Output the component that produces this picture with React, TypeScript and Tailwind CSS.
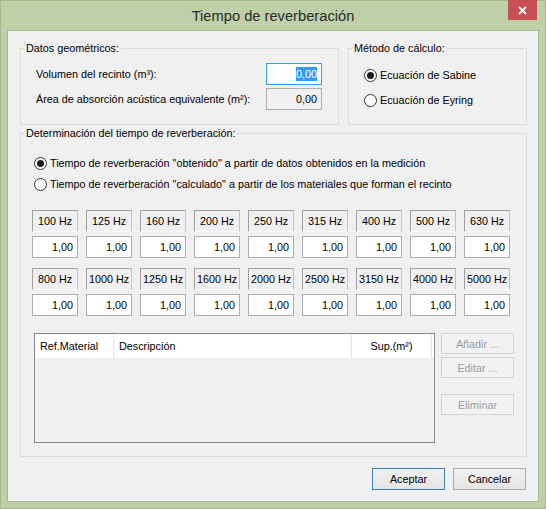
import React from "react";

const row1 = ["100", "125", "160", "200", "250", "315", "400", "500", "630"];
const row2 = ["800", "1000", "1250", "1600", "2000", "2500", "3150", "4000", "5000"];

function Radio({ checked }: { checked?: boolean }) {
  return (
    <span className="w-[13px] h-[13px] rounded-full border border-[#333333] bg-white flex items-center justify-center shrink-0">
      {checked && <span className="w-[7px] h-[7px] rounded-full bg-[#1c1c1c]" />}
    </span>
  );
}

function FreqLabel({ f }: { f: string }) {
  return (
    <div className="h-[22px] flex items-center justify-center border border-t-[#a0a0a0] border-l-[#a0a0a0] border-r-[#c4c4c4] border-b-[#f8f8f8] whitespace-nowrap">
      {f} Hz
    </div>
  );
}

function FreqValue() {
  return (
    <div className="h-[22px] flex items-center justify-end pr-[4px] bg-white border border-[#abadb3]">
      1,00
    </div>
  );
}

function DisabledBtn({ label }: { label: string }) {
  return (
    <div className="w-[73px] h-[21px] flex items-center justify-center border border-[#d4d4d4] bg-[#f2f2f2] text-[#9c9c9c]">
      {label}
    </div>
  );
}

export default function App() {
  return (
    <div className="w-[546px] h-[509px] bg-[#bfd0a8] border border-[#a3b78b] flex flex-col font-['Liberation_Sans',Arial,sans-serif] text-[10.8px] leading-[16px] text-black">
      {/* Title bar */}
      <div className="h-[29px] relative flex items-center justify-center">
        <span className="text-[14.7px] text-[#2b2b2b] pt-[1px]">Tiempo de reverberación</span>
        <div className="absolute right-[8px] top-[-1px] w-[29px] h-[20px] bg-[#c75050] flex items-center justify-center">
          <svg width="9" height="9" viewBox="0 0 9 9">
            <path d="M1 1 L8 8 M8 1 L1 8" stroke="white" strokeWidth="1.8" />
          </svg>
        </div>
      </div>

      {/* Client area */}
      <div className="mx-[6px] mb-[6px] flex-1 border border-[#a8bb90] bg-[#f0f0f0] flex flex-col">
        <div className="flex pl-[12px] pr-[11px] pt-[9px] gap-[9px]">
          <fieldset className="w-[319px] h-[85px] border border-[#dcdcdc]">
            <legend className="ml-[3px] px-[2px]">Datos geométricos:</legend>
            <div className="flex flex-col gap-[3px] pl-[15px] pr-[16px] pt-[7px]">
              <div className="flex items-center justify-between h-[22px]">
                <span className="whitespace-nowrap">Volumen del recinto (m³):</span>
                <div className="w-[56px] h-[22px] bg-white border border-[#3399ff] flex items-center justify-end pr-[4px]">
                  <span className="bg-[#3399ff] text-white leading-[14px]">0,00</span>
                </div>
              </div>
              <div className="flex items-center justify-between h-[22px]">
                <span className="whitespace-nowrap">Área de absorción acústica equivalente (m²):</span>
                <div className="w-[56px] h-[22px] bg-[#f0f0f0] border border-[#abadb3] flex items-center justify-end pr-[4px]">
                  0,00
                </div>
              </div>
            </div>
          </fieldset>
          <fieldset className="w-[179px] h-[85px] border border-[#dcdcdc]">
            <legend className="ml-[3px] px-[2px]">Método de cálculo:</legend>
            <div className="flex flex-col gap-[9px] pl-[15px] pt-[11px]">
              <div className="flex items-center gap-[3px] h-[16px]">
                <Radio checked />
                <span>Ecuación de Sabine</span>
              </div>
              <div className="flex items-center gap-[3px] h-[16px]">
                <Radio />
                <span>Ecuación de Eyring</span>
              </div>
            </div>
          </fieldset>
        </div>

        <div className="pl-[12px] pr-[11px]">
          <fieldset className="w-[507px] h-[332px] border border-[#dcdcdc]">
            <legend className="ml-[3px] px-[2px]">Determinación del tiempo de reverberación:</legend>
            <div className="pl-[13px] pt-[14px] flex flex-col gap-[5px]">
              <div className="flex items-center gap-[3px] h-[16px]">
                <Radio checked />
                <span>Tiempo de reverberación "obtenido" a partir de datos obtenidos en la medición</span>
              </div>
              <div className="flex items-center gap-[3px] h-[16px]">
                <Radio />
                <span>Tiempo de reverberación "calculado" a partir de los materiales que forman el recinto</span>
              </div>
            </div>

            <div className="pl-[11px] mt-[18px] flex flex-col gap-[10px]">
              {[row1, row2].map((row, i) => (
                <div key={i} className="grid grid-cols-[repeat(9,46px)] gap-x-[8px] gap-y-[4px]">
                  {row.map((f) => (
                    <FreqLabel key={f} f={f} />
                  ))}
                  {row.map((f) => (
                    <FreqValue key={f + "v"} />
                  ))}
                </div>
              ))}
            </div>

            <div className="pl-[13px] mt-[17px] flex gap-[6px]">
              <div className="w-[401px] h-[110px] border border-[#828790] bg-[#f0f0f0]">
                <div className="h-[24px] bg-white flex">
                  <div className="w-[79px] border-r border-[#e5e5e5] pl-[5px] flex items-center">Ref.Material</div>
                  <div className="w-[238px] border-r border-[#e5e5e5] pl-[5px] flex items-center">Descripción</div>
                  <div className="w-[80px] border-r border-[#e5e5e5] flex items-center justify-center">Sup.(m²)</div>
                </div>
              </div>
              <div className="flex flex-col">
                <DisabledBtn label="Añadir ..." />
                <div className="mt-[3px]">
                  <DisabledBtn label="Editar ..." />
                </div>
                <div className="mt-[16px]">
                  <DisabledBtn label="Eliminar" />
                </div>
              </div>
            </div>
          </fieldset>
        </div>

        <div className="flex justify-end gap-[8px] pr-[12px] mt-[11px]">
          <div className="w-[73px] h-[22px] flex items-center justify-center border border-[#3c7fb1] bg-gradient-to-b from-[#f0f0f0] to-[#e5e5e5]">
            Aceptar
          </div>
          <div className="w-[73px] h-[22px] flex items-center justify-center border border-[#acacac] bg-gradient-to-b from-[#f0f0f0] to-[#e5e5e5]">
            Cancelar
          </div>
        </div>
      </div>
    </div>
  );
}
